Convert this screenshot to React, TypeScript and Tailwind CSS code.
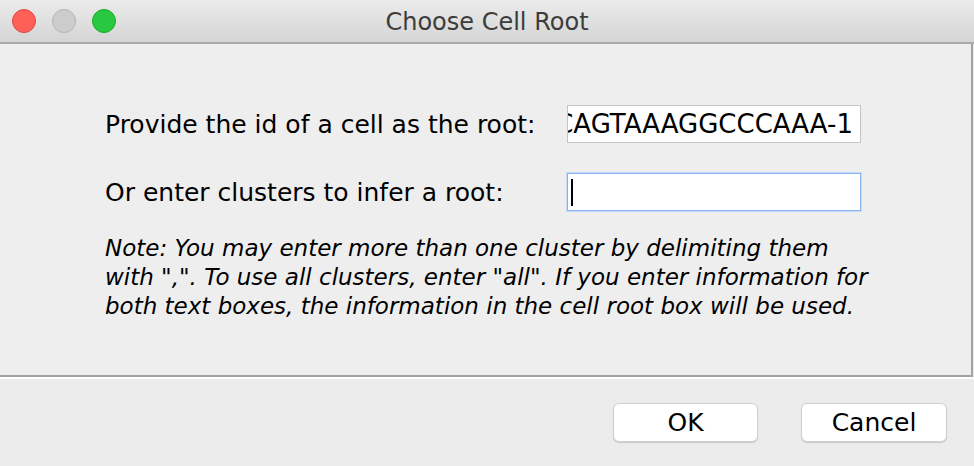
import React from "react";

const font = { fontFamily: '"DejaVu Sans", "Liberation Sans", sans-serif' };

function TrafficLights() {
  return (
    <div className="flex items-center gap-[16px] pl-[12px]">
      <span className="w-[24px] h-[24px] rounded-full bg-[#fe5f57] border border-[#e2463f]" />
      <span className="w-[24px] h-[24px] rounded-full bg-[#cdcdcd] border border-[#b3b3b3]" />
      <span className="w-[24px] h-[24px] rounded-full bg-[#28c840] border border-[#1aab29]" />
    </div>
  );
}

export default function App() {
  return (
    <div className="w-[974px] h-[466px] bg-[#ececec] flex flex-col overflow-hidden text-black" style={font}>
      {/* title bar */}
      <div className="relative h-[44px] shrink-0 flex items-center bg-gradient-to-b from-[#ebebeb] to-[#d5d5d5] border-b-2 border-[#a9a9a9]">
        <TrafficLights />
        <div className="absolute inset-0 flex items-center justify-center text-[24px] text-[#3c3c3c] pt-[2px]">
          Choose Cell Root
        </div>
      </div>

      {/* content panel */}
      <div className="h-[333px] w-[973px] shrink-0 border-r-2 border-b-2 border-[#a3a3a3] bg-[#eeeeee] pl-[105px] pt-[61px]">
        <div className="flex items-center h-[38px]">
          <div className="w-[462px] text-[25px] leading-none">Provide the id of a cell as the root:</div>
          <div className="w-[294px] h-[38px] bg-white border border-[#c4c4c4] flex items-center justify-end overflow-hidden pr-[7px] text-[26px] leading-none whitespace-nowrap">
            <span className="shrink-0">CAGTAAAGGCCCAAA-1</span>
          </div>
        </div>
        <div className="flex items-center h-[38px] mt-[30px]">
          <div className="w-[462px] text-[25px] leading-none">Or enter clusters to infer a root:</div>
          <div className="w-[294px] h-[38px] bg-white border border-[#86b3ee] shadow-[0_0_0_1px_#c5dcf8] flex items-center pl-[3px]">
            <span className="w-[2px] h-[27px] bg-black" />
          </div>
        </div>
        <p className="mt-[23px] italic text-[23px] leading-[29px]">
          Note: You may enter more than one cluster by delimiting them
          <br />
          with ",". To use all clusters, enter "all". If you enter information for
          <br />
          both text boxes, the information in the cell root box will be used.
        </p>
      </div>
      <div className="h-[2px] w-full bg-white shrink-0" />

      {/* buttons */}
      <div className="flex justify-end gap-[43px] pr-[27px] pt-[24px]">
        <button className="w-[145px] h-[39px] bg-white rounded-[6px] border border-[#cfcfcf] shadow-[0_1px_1px_rgba(0,0,0,0.15)] text-[25px] leading-none">
          OK
        </button>
        <button className="w-[146px] h-[39px] bg-white rounded-[6px] border border-[#cfcfcf] shadow-[0_1px_1px_rgba(0,0,0,0.15)] text-[25px] leading-none">
          Cancel
        </button>
      </div>
    </div>
  );
}
